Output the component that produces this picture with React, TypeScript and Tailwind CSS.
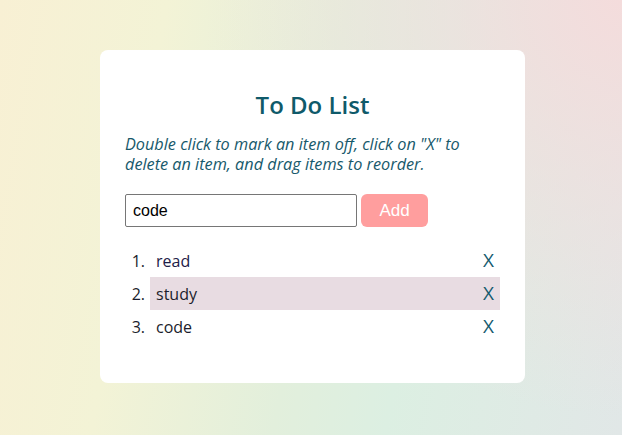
import { useState } from "react";

const INITIAL_ITEMS = ["read", "study", "code"];

export default function App() {
  const [items, setItems] = useState<string[]>(INITIAL_ITEMS);
  const [draft, setDraft] = useState("code");
  const [done, setDone] = useState<number[]>([]);
  const hovered = 1;

  function addItem() {
    if (!draft.trim()) return;
    setItems([...items, draft.trim()]);
    setDraft("");
  }

  function removeItem(index: number) {
    setItems(items.filter((_, i) => i !== index));
  }

  function toggleDone(index: number) {
    setDone(done.includes(index) ? done.filter((i) => i !== index) : [...done, index]);
  }

  return (
    <div className="flex min-h-[435px] w-full items-start justify-center bg-[radial-gradient(circle_at_100%_0%,#f4dcdc_0%,rgba(244,220,220,0)_55%),linear-gradient(100deg,#f8f0d4_0%,#f3f3d6_24%,#e2efdc_50%,#dcefe2_66%,#e1e7e7_100%)] pt-[50px] font-['Open_Sans',sans-serif]">
      <div className="ml-[3px] w-[425px] rounded-lg bg-white px-[25px] pb-[40px] pt-[38px]">
        <h1 className="text-center text-[24px] font-semibold leading-[34px] text-[#0f5a6a]">To Do List</h1>
        <p className="mt-[13px] text-[16.25px] italic leading-[19.5px] text-[#17596b]">
          Double click to mark an item off, click on "X" to delete an item, and drag items to reorder.
        </p>

        <div className="mt-[20px] flex gap-[4px]">
          <input
            value={draft}
            onChange={(e) => setDraft(e.target.value)}
            className="h-[33px] w-[232px] rounded-[2px] border border-[#767676] px-[7px] font-['Liberation_Sans',Arial,sans-serif] text-[16px] text-black outline-none"
          />
          <button
            onClick={addItem}
            className="h-[33px] w-[67px] rounded-md bg-[#ff9e9e] font-['Liberation_Sans',Arial,sans-serif] text-[17px] text-white"
          >
            Add
          </button>
        </div>

        <ol className="mt-[17px]">
          {items.map((item, index) => (
            <li key={item + index} className="flex h-[33px] items-center">
              <span className="w-[25px] pr-[5px] text-right text-[16px] text-[#1b1d2c]">{index + 1}.</span>
              <div
                onDoubleClick={() => toggleDone(index)}
                className={`flex h-full flex-1 items-center justify-between pl-[6px] pr-[6px] ${
                  index === hovered ? "bg-[#e8dce2]" : ""
                }`}
              >
                <span
                  className={`text-[16px] ${index === 0 ? "text-[#1d2048]" : "text-[#1b1d2c]"} ${
                    done.includes(index) ? "line-through" : ""
                  }`}
                >
                  {item}
                </span>
                <button
                  onClick={() => removeItem(index)}
                  className="text-[19px] font-medium leading-none text-[#145a6e]"
                >
                  X
                </button>
              </div>
            </li>
          ))}
        </ol>
      </div>
    </div>
  );
}
